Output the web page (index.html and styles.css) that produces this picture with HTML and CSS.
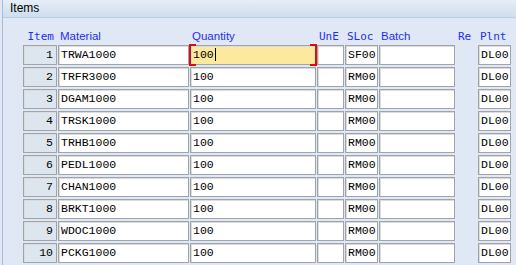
FILE: index.html
```html
<!DOCTYPE html>
<html lang="en">
<head>
    <meta charset="UTF-8">
    <title>Items</title>
    <link rel="stylesheet" href="styles.css">
</head>
<body>
    <div class="panel">
        <div class="panel-title">Items</div>

        <div class="items">
            <div class="head mono right">Item</div>
            <div class="head">Material</div>
            <div class="head">Quantity</div>
            <div class="head mono">UnE</div>
            <div class="head mono">SLoc</div>
            <div class="head">Batch</div>
            <div class="head mono">Re</div>
            <div class="head mono">Plnt</div>

            <div class="field num">1</div>
            <div class="field">TRWA1000</div>
            <div class="field focus"><span class="caret">100</span></div>
            <div class="field"></div>
            <div class="field">SF00</div>
            <div class="field"></div>
            <div></div>
            <div class="field">DL00</div>

            <div class="field num">2</div>
            <div class="field">TRFR3000</div>
            <div class="field">100</div>
            <div class="field"></div>
            <div class="field">RM00</div>
            <div class="field"></div>
            <div></div>
            <div class="field">DL00</div>

            <div class="field num">3</div>
            <div class="field">DGAM1000</div>
            <div class="field">100</div>
            <div class="field"></div>
            <div class="field">RM00</div>
            <div class="field"></div>
            <div></div>
            <div class="field">DL00</div>

            <div class="field num">4</div>
            <div class="field">TRSK1000</div>
            <div class="field">100</div>
            <div class="field"></div>
            <div class="field">RM00</div>
            <div class="field"></div>
            <div></div>
            <div class="field">DL00</div>

            <div class="field num">5</div>
            <div class="field">TRHB1000</div>
            <div class="field">100</div>
            <div class="field"></div>
            <div class="field">RM00</div>
            <div class="field"></div>
            <div></div>
            <div class="field">DL00</div>

            <div class="field num">6</div>
            <div class="field">PEDL1000</div>
            <div class="field">100</div>
            <div class="field"></div>
            <div class="field">RM00</div>
            <div class="field"></div>
            <div></div>
            <div class="field">DL00</div>

            <div class="field num">7</div>
            <div class="field">CHAN1000</div>
            <div class="field">100</div>
            <div class="field"></div>
            <div class="field">RM00</div>
            <div class="field"></div>
            <div></div>
            <div class="field">DL00</div>

            <div class="field num">8</div>
            <div class="field">BRKT1000</div>
            <div class="field">100</div>
            <div class="field"></div>
            <div class="field">RM00</div>
            <div class="field"></div>
            <div></div>
            <div class="field">DL00</div>

            <div class="field num">9</div>
            <div class="field">WDOC1000</div>
            <div class="field">100</div>
            <div class="field"></div>
            <div class="field">RM00</div>
            <div class="field"></div>
            <div></div>
            <div class="field">DL00</div>

            <div class="field num">10</div>
            <div class="field">PCKG1000</div>
            <div class="field">100</div>
            <div class="field"></div>
            <div class="field">RM00</div>
            <div class="field"></div>
            <div></div>
            <div class="field">DL00</div>
        </div>
    </div>
</body>
</html>
```

FILE: styles.css
```css
:root {
    --panel: #dfe8f4;
    --title-top: #e6eef8;
    --title-bottom: #cfdded;
    --edge: #a9bdd4;
    --label: #1f2fee;
    --field-border: #9ea4aa;
    --field-inner: #dcdcdc;
}

* {
    margin: 0;
    padding: 0;
    box-sizing: border-box;
}

body {
    background: var(--panel);
    font-family: "Liberation Sans", Arial, sans-serif;
    overflow: hidden;
}

.panel {
    margin-left: 2px;
    min-height: 265px;
    border-left: 1px solid var(--edge);
    background: var(--panel);
}

.panel-title {
    height: 18px;
    padding: 1px 0 0 7px;
    font-size: 12px;
    line-height: 15px;
    color: #000;
    background: linear-gradient(var(--title-top), var(--title-bottom));
    border-bottom: 1px solid #b9cbe0;
}

.items {
    display: grid;
    grid-template-columns: 34px 131px 126px 27px 33px 76px 21px 33px;
    grid-auto-rows: 20px;
    grid-template-rows: 19px;
    column-gap: 1px;
    row-gap: 2px;
    padding: 6px 0 0 20px;
}

.head {
    align-self: end;
    color: var(--label);
    font-size: 11.5px;
    line-height: 13px;
    padding-left: 2px;
    white-space: nowrap;
}

.head.mono {
    font-family: "DejaVu Sans Mono", monospace;
    font-size: 11px;
}

.head.right {
    text-align: right;
    padding: 0 3px 0 0;
}

.field {
    background: #fff;
    border: 1px solid var(--field-border);
    box-shadow: inset 1px 1px 0 var(--field-inner);
    font-family: "Liberation Mono", "Courier New", monospace;
    font-size: 11.5px;
    line-height: 18px;
    padding-left: 2px;
    color: #000;
    white-space: nowrap;
    overflow: hidden;
}

.field.num {
    background: #dde6ef;
    text-align: right;
    padding: 0 3px 0 0;
}

/* focused cell: yellow with red brackets */
.field.focus {
    position: relative;
    overflow: visible;
    background: #fde99e;
}

.field.focus::before,
.field.focus::after {
    content: "";
    position: absolute;
    top: -2px;
    bottom: -2px;
    width: 5px;
    border: 2px solid #d40f0f;
}

.field.focus::before {
    left: -2px;
    border-right: none;
}

.field.focus::after {
    right: -2px;
    border-left: none;
}

.caret {
    border-right: 1px solid #000;
    padding-right: 1px;
}
```
